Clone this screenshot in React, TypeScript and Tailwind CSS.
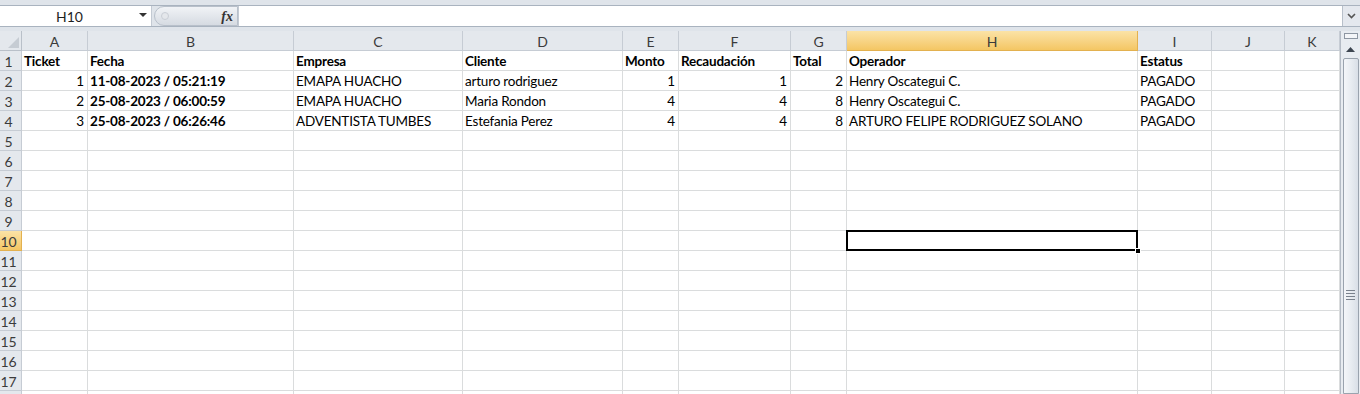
import React from "react";

const cols = [
  { key: "A", w: 66 },
  { key: "B", w: 206 },
  { key: "C", w: 169 },
  { key: "D", w: 160 },
  { key: "E", w: 56 },
  { key: "F", w: 112 },
  { key: "G", w: 56 },
  { key: "H", w: 291 },
  { key: "I", w: 74 },
  { key: "J", w: 73 },
  { key: "K", w: 55 },
];

type Cell = { v: string; bold?: boolean; num?: boolean };

const data: Cell[][] = [
  [
    { v: "Ticket", bold: true },
    { v: "Fecha", bold: true },
    { v: "Empresa", bold: true },
    { v: "Cliente", bold: true },
    { v: "Monto", bold: true },
    { v: "Recaudación", bold: true },
    { v: "Total", bold: true },
    { v: "Operador", bold: true },
    { v: "Estatus", bold: true },
  ],
  [
    { v: "1", num: true },
    { v: "11-08-2023 / 05:21:19", bold: true },
    { v: "EMAPA HUACHO" },
    { v: "arturo rodriguez" },
    { v: "1", num: true },
    { v: "1", num: true },
    { v: "2", num: true },
    { v: "Henry Oscategui C." },
    { v: "PAGADO" },
  ],
  [
    { v: "2", num: true },
    { v: "25-08-2023 / 06:00:59", bold: true },
    { v: "EMAPA HUACHO" },
    { v: "Maria Rondon" },
    { v: "4", num: true },
    { v: "4", num: true },
    { v: "8", num: true },
    { v: "Henry Oscategui C." },
    { v: "PAGADO" },
  ],
  [
    { v: "3", num: true },
    { v: "25-08-2023 / 06:26:46", bold: true },
    { v: "ADVENTISTA TUMBES" },
    { v: "Estefania Perez" },
    { v: "4", num: true },
    { v: "4", num: true },
    { v: "8", num: true },
    { v: "ARTURO FELIPE RODRIGUEZ SOLANO" },
    { v: "PAGADO" },
  ],
];

// 17 labelled rows, plus the sliver of row 18 at the bottom edge
const rowCount = 18;

function FormulaBar() {
  return (
    <div className="h-[31px] bg-[#dfe4ea] pt-[5px] flex flex-col">
      <div className="h-[22px] flex items-stretch border-y border-[#a9b3bf] bg-white">
        <div className="w-[152px] flex items-center relative border-r border-[#c3cad3]">
          <span className="flex-1 text-center text-[14px] text-[#1e1e1e] pr-[12px]">H10</span>
          <span className="absolute right-[4px] top-[7px] w-0 h-0 border-l-[4px] border-r-[4px] border-t-[4px] border-l-transparent border-r-transparent border-t-[#333]" />
        </div>
        <div className="w-[86px] bg-[#dfe4ea] flex items-center">
          <div className="ml-[2px] h-[20px] flex-1 rounded-l-full bg-gradient-to-b from-[#f1f3f6] to-[#d6dbe2] border border-[#b8c0ca] flex items-center justify-between pl-[6px] pr-[4px]">
            <span className="w-[8px] h-[8px] rounded-full bg-[#e4e7eb] border border-[#c9ced5]" />
            <span className="italic font-bold text-[14px] text-[#333] [font-family:'Liberation_Serif',serif]">fx</span>
          </div>
        </div>
        <div className="flex-1 border-l border-[#c3cad3]" />
        <div className="w-[18px] bg-[#e4e8ee] border-l border-[#b8c0ca] flex items-center justify-center">
          <svg width="9" height="6" viewBox="0 0 9 6">
            <path d="M1 1 L4.5 4.5 L8 1" stroke="#555" strokeWidth="1.6" fill="none" />
          </svg>
        </div>
      </div>
    </div>
  );
}

function HeaderRow() {
  return (
    <div className="flex h-[20px]">
      <div className="w-[22px] shrink-0 bg-[#e4e8ed] border-r border-b border-[#b9c0c9] relative">
        <svg className="absolute right-[2px] bottom-[2px]" width="11" height="11" viewBox="0 0 11 11">
          <polygon points="11,0 11,11 0,11" fill="#c6ccd3" />
        </svg>
      </div>
      {cols.map((c) => {
        const sel = c.key === "H";
        return (
          <div
            key={c.key}
            style={{ width: c.w }}
            className={
              sel
                ? "shrink-0 h-[20px] flex items-center justify-center pt-[1px] text-[14px] text-[#3b3b3b] bg-gradient-to-b from-[#fbe3a6] to-[#f4c663] border-r border-b border-[#e3b14f]"
                : "shrink-0 h-[20px] flex items-center justify-center pt-[1px] text-[14px] text-[#3b3b3b] bg-[#e4e8ed] border-r border-b border-[#c6ccd4]"
            }
          >
            {c.key}
          </div>
        );
      })}
    </div>
  );
}

function DataRow({ r }: { r: number }) {
  const cells = data[r - 1];
  const sel = r === 10;
  return (
    <div className="flex h-[20px]">
      <div
        className={
          sel
            ? "w-[22px] shrink-0 flex items-center justify-center pr-[4px] pt-[1px] text-[14px] text-[#3b3b3b] bg-gradient-to-b from-[#fbe3a6] to-[#f4c663] border-r border-b border-[#e3b14f]"
            : "w-[22px] shrink-0 flex items-center justify-center pr-[4px] pt-[1px] text-[14px] text-[#3b3b3b] bg-[#e4e8ed] border-r border-b border-[#c6ccd4]"
        }
      >
        {r <= 17 ? r : ""}
      </div>
      {cols.map((c, i) => {
        const cell = cells ? cells[i] : undefined;
        const isSel = sel && c.key === "H";
        return (
          <div
            key={c.key}
            style={{ width: c.w }}
            className={
              "shrink-0 h-[20px] border-r border-b border-[#dadcdd] relative" + (isSel ? " z-10" : "")
            }
          >
            {cell && (
              <div
                className={
                  "h-full pt-[1px] leading-[19px] whitespace-nowrap text-[13.5px] tracking-[-0.2px] text-black px-[2px] " +
                  (cell.num ? "text-right pr-[3px] " : "") +
                  (cell.bold ? "font-bold" : "")
                }
              >
                {cell.v}
              </div>
            )}
            {isSel && (
              <>
                <div className="absolute -left-[1px] -top-[1px] -right-[1px] -bottom-[1px] border-2 border-black" />
                <div className="absolute -right-[4px] -bottom-[4px] w-[6px] h-[6px] bg-black border border-white" />
              </>
            )}
          </div>
        );
      })}
    </div>
  );
}

function ScrollBar() {
  return (
    <div className="w-[20px] shrink-0 bg-[#e8ecf1] border-l border-[#b5bcc6] flex flex-col items-center">
      <div className="mt-[2px] w-[14px] h-[6px] border border-[#8d96a2] bg-[#f3f5f8]" />
      <div className="mt-[3px] h-[14px] flex items-center justify-center">
        <svg width="9" height="5" viewBox="0 0 9 5">
          <polygon points="4.5,0 9,5 0,5" fill="#3d4550" />
        </svg>
      </div>
      <div className="mt-[2px] w-[16px] flex-1 rounded-t-[2px] border border-[#9aa3ae] bg-gradient-to-r from-[#f4f6f9] via-[#e8ecf1] to-[#d9dfe7] flex flex-col items-center pt-[231px] gap-[2px]">
        <div className="w-[9px] h-[1px] bg-[#7a828d]" />
        <div className="w-[9px] h-[1px] bg-[#7a828d]" />
        <div className="w-[9px] h-[1px] bg-[#7a828d]" />
        <div className="w-[9px] h-[1px] bg-[#7a828d]" />
      </div>
    </div>
  );
}

export default function App() {
  return (
    <div className="w-[1360px] h-[394px] overflow-hidden bg-white [font-family:Lato,'Liberation_Sans',sans-serif]">
      <FormulaBar />
      <div className="flex h-[363px] overflow-hidden">
        <div className="w-[1340px] shrink-0">
          <HeaderRow />
          {Array.from({ length: rowCount }, (_, i) => (
            <DataRow key={i} r={i + 1} />
          ))}
        </div>
        <ScrollBar />
      </div>
    </div>
  );
}
